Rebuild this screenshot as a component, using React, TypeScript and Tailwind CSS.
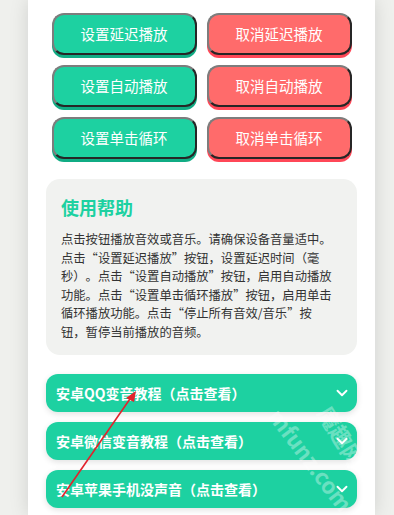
import { ChevronDown } from "lucide-react";

const rows = [
	["设置延迟播放", "取消延迟播放"],
	["设置自动播放", "取消自动播放"],
	["设置单击循环", "取消单击循环"],
];

const helpLines = [
	"点击按钮播放音效或音乐。请确保设备音量适中。",
	"点击“设置延迟播放”按钮，设置延迟时间（毫",
	"秒）。点击“设置自动播放”按钮，启用自动播放",
	"功能。点击“设置单击循环播放”按钮，启用单击",
	"循环播放功能。点击“停止所有音效/音乐”按",
	"钮，暂停当前播放的音频。",
];

const tutorials = [
	"安卓QQ变音教程（点击查看）",
	"安卓微信变音教程（点击查看）",
	"安卓苹果手机没声音（点击查看）",
];

export default function App() {
	return (
		<div
			className="relative h-[515px] overflow-hidden bg-[#eff0ed] [text-spacing-trim:space-all]"
			style={{ fontFamily: '"Noto Sans CJK SC", "Noto Sans", sans-serif' }}
		>
			<div className="ml-[28px] h-full w-[347px] bg-white px-[18px] pt-[13px] shadow-[0_0_18px_rgba(0,0,0,0.13)]">
				<div className="mx-auto grid w-[300px] grid-cols-2 gap-x-[10px] gap-y-[10px]">
					{rows.map(([set, cancel]) => [
						<button
							key={set}
							type="button"
							className="h-[42px] rounded-[12px] border-2 border-t-[#7d7d7d] border-l-[#7d7d7d] border-b-[#262626] border-r-[#262626] bg-[#1dd1a1] text-[14.5px] text-white shadow-[0_3px_0_#10ac84]"
						>
							{set}
						</button>,
						<button
							key={cancel}
							type="button"
							className="h-[42px] rounded-[12px] border-2 border-t-[#7d7d7d] border-l-[#7d7d7d] border-b-[#262626] border-r-[#262626] bg-[#ff6b6b] text-[14.5px] text-white shadow-[0_3px_0_#ff4757]"
						>
							{cancel}
						</button>,
					])}
				</div>

				<div className="mt-[20px] h-[176px] rounded-[14px] bg-[#f1f2f0] px-[15px] pt-[15px]">
					<h2 className="text-[18px] font-bold leading-[26px] text-[#1dd1a1]">使用帮助</h2>
					<p className="mt-[10px] text-[12.3px] leading-[18.6px] text-[#333]">
						{helpLines.map((l, i) => (
							<span key={i}>
								{l}
								{i < helpLines.length - 1 && <br />}
							</span>
						))}
					</p>
				</div>

				<div className="mt-[19px] flex flex-col gap-[10px]">
					{tutorials.map((t) => (
						<div
							key={t}
							className="flex h-[38px] items-center justify-between rounded-[12px] bg-[#1dd1a1] pl-[10px] pr-[6px] text-[14px] font-bold text-white shadow-[0_2px_6px_rgba(0,0,0,0.12)]"
						>
							<span>{t}</span>
							<ChevronDown size={18} strokeWidth={2.5} />
						</div>
					))}
				</div>
			</div>

			{/* watermark */}
			<span className="pointer-events-none absolute left-[284px] top-[404px] origin-top-left rotate-[53deg] whitespace-nowrap text-[22px] font-bold leading-none text-white/35">
				mfunz.com
			</span>
			<span className="pointer-events-none absolute left-[334px] top-[402px] origin-top-left rotate-[58deg] whitespace-nowrap text-[22px] font-bold leading-none text-white/35">
				魔趣网
			</span>

			{/* annotation arrow */}
			<svg className="pointer-events-none absolute left-0 top-0" width="394" height="515">
				<line x1="62" y1="497" x2="132" y2="396" stroke="#e2222c" strokeWidth="1.6" />
				<polygon points="136,391 126,398 134,402" fill="#e2222c" />
			</svg>
		</div>
	);
}
